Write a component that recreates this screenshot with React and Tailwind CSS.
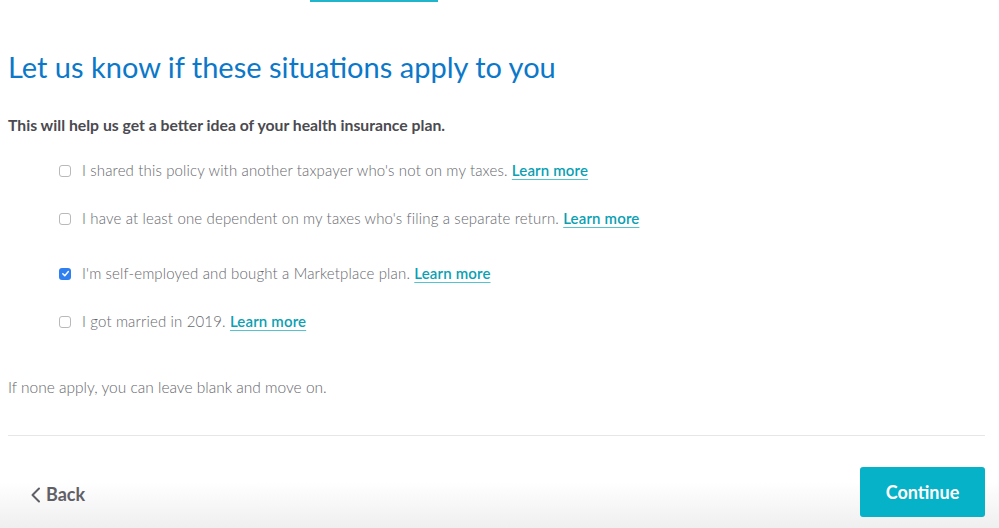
import React, { useState } from 'react';

const items = [
    { text: "I shared this policy with another taxpayer who's not on my taxes.", checked: false },
    { text: "I have at least one dependent on my taxes who's filing a separate return.", checked: false },
    { text: "I'm self-employed and bought a Marketplace plan.", checked: true },
    { text: "I got married in 2019.", checked: false },
];

function Row({ text, checked }) {
    const [on, setOn] = useState(checked);
    return (
        <label className="flex items-center gap-[11px] pl-[51px] cursor-pointer">
            {on ? (
                <span onClick={() => setOn(false)} className="w-[12px] h-[12px] rounded-[3px] bg-[#2f7ff0] flex items-center justify-center">
                    <svg width="9" height="9" viewBox="0 0 10 10"><path d="M2 5.2 L4.2 7.4 L8.2 2.8" fill="none" stroke="white" strokeWidth="1.6" strokeLinecap="round" strokeLinejoin="round" /></svg>
                </span>
            ) : (
                <span onClick={() => setOn(true)} className="w-[12px] h-[12px] rounded-[3px] border border-[#b9b9bc] bg-white" />
            )}
            <span className="text-[15px] text-[#66676d] font-light tracking-[0.15px]">
                {text}{' '}
                <a href="#" className="text-[#0a9fb3] font-semibold underline underline-offset-[3px] decoration-[#55c3cf]">Learn more</a>
            </span>
        </label>
    );
}

export default function App() {
    return (
        <div className="w-[999px] h-[528px] bg-white overflow-hidden flex flex-col font-['Lato',sans-serif]">
            {/* progress bar stub */}
            <div className="h-[3px] pl-[310px]">
                <div className="w-[128px] h-[2px] bg-[#21b5cc]" />
            </div>
            <div className="px-[8px] pr-[14px] flex-1 flex flex-col">
                <h1 className="mt-[46px] text-[29px] leading-[36px] text-[#0b78c9] font-normal">Let us know if these situations apply to you</h1>
                <p className="mt-[28px] text-[15.75px] font-bold text-[#4a4a50]">This will help us get a better idea of your health insurance plan.</p>
                <div className="mt-[22px] flex flex-col">
                    <div className="h-[24px] flex items-center"><Row {...items[0]} /></div>
                    <div className="mt-[24px] h-[24px] flex items-center"><Row {...items[1]} /></div>
                    <div className="mt-[31px] h-[24px] flex items-center"><Row {...items[2]} /></div>
                    <div className="mt-[24px] h-[24px] flex items-center"><Row {...items[3]} /></div>
                </div>
                <p className="mt-[42px] text-[15.5px] font-light text-[#66676d]">If none apply, you can leave blank and move on.</p>
                <div className="mt-[36px] border-t border-[#e6e6e8]" />
            </div>
            <div className="h-[92px] bg-gradient-to-b from-white from-50% to-[#efefef] flex items-start justify-between pl-[30px] pr-[14px] pt-[31px]">
                <button className="mt-[14px] flex items-center gap-[5px] text-[18px] font-bold text-[#5f6066]">
                    <svg width="11" height="16" viewBox="0 0 11 16"><path d="M9 1.5 L2.5 8 L9 14.5" fill="none" stroke="#5f6066" strokeWidth="2" strokeLinecap="round" strokeLinejoin="round" /></svg>
                    Back
                </button>
                <button className="w-[125px] h-[50px] rounded-[3px] bg-[#05b2c8] text-white text-[18px] font-bold">Continue</button>
            </div>
        </div>
    );
}
